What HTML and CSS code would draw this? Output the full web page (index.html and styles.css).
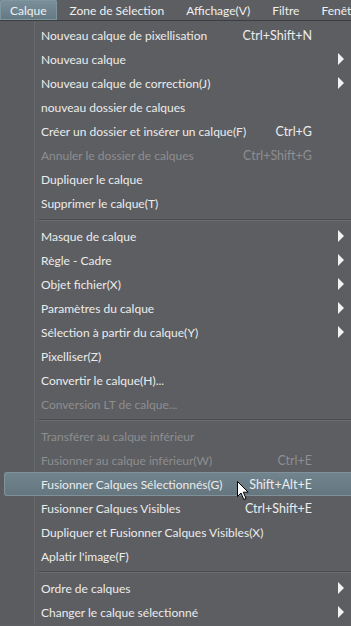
FILE: index.html
```html
<!DOCTYPE html>
<html lang="fr">
<head>
    <meta charset="UTF-8">
    <title>Calque</title>
    <link rel="stylesheet" href="styles.css">
</head>
<body>

    <div class="menubar">
        <span class="menubar-item active">Calque</span>
        <span class="menubar-item">Zone de Sélection</span>
        <span class="menubar-item">Affichage(V)</span>
        <span class="menubar-item">Filtre</span>
        <span class="menubar-item">Fenêtre</span>
    </div>

    <div class="menu">
        <div class="item"><span class="label">Nouveau calque de pixellisation</span><span class="key">Ctrl+Shift+N</span><span class="arrow"></span></div>
        <div class="item"><span class="label">Nouveau calque</span><span class="key"></span><span class="arrow sub"></span></div>
        <div class="item"><span class="label">Nouveau calque de correction(J)</span><span class="key"></span><span class="arrow sub"></span></div>
        <div class="item"><span class="label">nouveau dossier de calques</span><span class="key"></span><span class="arrow"></span></div>
        <div class="item"><span class="label">Créer un dossier et insérer un calque(F)</span><span class="key">Ctrl+G</span><span class="arrow"></span></div>
        <div class="item disabled"><span class="label">Annuler le dossier de calques</span><span class="key">Ctrl+Shift+G</span><span class="arrow"></span></div>
        <div class="item"><span class="label">Dupliquer le calque</span><span class="key"></span><span class="arrow"></span></div>
        <div class="item"><span class="label">Supprimer le calque(T)</span><span class="key"></span><span class="arrow"></span></div>

        <div class="sep first"></div>

        <div class="item"><span class="label">Masque de calque</span><span class="key"></span><span class="arrow sub"></span></div>
        <div class="item"><span class="label">Règle - Cadre</span><span class="key"></span><span class="arrow sub"></span></div>
        <div class="item"><span class="label">Objet fichier(X)</span><span class="key"></span><span class="arrow sub"></span></div>
        <div class="item"><span class="label">Paramètres du calque</span><span class="key"></span><span class="arrow sub"></span></div>
        <div class="item"><span class="label">Sélection à partir du calque(Y)</span><span class="key"></span><span class="arrow sub"></span></div>
        <div class="item"><span class="label">Pixelliser(Z)</span><span class="key"></span><span class="arrow"></span></div>
        <div class="item"><span class="label">Convertir le calque(H)...</span><span class="key"></span><span class="arrow"></span></div>
        <div class="item disabled"><span class="label">Conversion LT de calque...</span><span class="key"></span><span class="arrow"></span></div>

        <div class="sep"></div>

        <div class="item disabled"><span class="label">Transférer au calque inférieur</span><span class="key"></span><span class="arrow"></span></div>
        <div class="item disabled"><span class="label">Fusionner au calque inférieur(W)</span><span class="key">Ctrl+E</span><span class="arrow"></span></div>
        <div class="item hover"><span class="label">Fusionner Calques Sélectionnés(G)</span><span class="key">Shift+Alt+E</span><span class="arrow"></span>
            <svg class="cursor" width="13" height="20" viewBox="0 0 13 20">
                <path d="M0.5 0.5 L0.5 15.5 L4 12 L6.8 18.5 L9 17.5 L6.3 11.2 L11.2 11.2 Z" fill="#fff" stroke="#000" stroke-width="1"/>
            </svg>
        </div>
        <div class="item"><span class="label">Fusionner Calques Visibles</span><span class="key">Ctrl+Shift+E</span><span class="arrow"></span></div>
        <div class="item"><span class="label">Dupliquer et Fusionner Calques Visibles(X)</span><span class="key"></span><span class="arrow"></span></div>
        <div class="item"><span class="label">Aplatir l'image(F)</span><span class="key"></span><span class="arrow"></span></div>

        <div class="sep"></div>

        <div class="item"><span class="label">Ordre de calques</span><span class="key"></span><span class="arrow sub"></span></div>
        <div class="item"><span class="label">Changer le calque sélectionné</span><span class="key"></span><span class="arrow sub"></span></div>
    </div>

</body>
</html>
```

FILE: styles.css
```css
body {
    margin: 0;
    width: 351px;
    height: 626px;
    overflow: hidden;
    background-color: #5d5e61;
    font-family: 'Lato', 'Open Sans', sans-serif;
    font-size: 12px;
    color: #ececec;
}

.menubar {
    display: flex;
    height: 20px;
    border-bottom: 1px solid #3c3d40;
    background-color: #5d5e61;
    white-space: nowrap;
    overflow: hidden;
}

.menubar-item {
    display: flex;
    align-items: center;
    flex: none;
    padding: 0 11px;
    color: #f0f0f0;
}

.menubar-item.active {
    background: linear-gradient(#7a909b, #647882);
    border-radius: 2px 2px 0 0;
    box-shadow: inset 0 0 0 1px #80969f;
    padding: 0 10px;
    margin-right: 2px;
}

.menu {
    position: relative;
    padding-top: 2px;
    background: linear-gradient(to right, #5b5c5f 34px, #68696c 34px, #68696c 35px, #5d5e61 35px);
}

.item {
    position: relative;
    display: grid;
    grid-template-columns: minmax(0, 1fr) auto 39px;
    align-items: center;
    height: 24px;
    padding-left: 41px;
    white-space: nowrap;
}

.item .key {
    text-align: right;
    font-size: 12.5px;
}

.item .arrow.sub::after {
    content: '';
    display: block;
    margin-left: 26px;
    border-left: 6px solid #f2f2f2;
    border-top: 6px solid transparent;
    border-bottom: 6px solid transparent;
    width: 0;
    height: 0;
}

.item.disabled {
    color: #8d8e91;
}

.item.hover {
    margin-left: 4px;
    padding-left: 36px;
    background: linear-gradient(#71848e, #65767f);
    border: 1px solid #7f929b;
    border-right: none;
    border-radius: 3px 0 0 3px;
    height: 22px;
}

.cursor {
    position: absolute;
    left: 232px;
    top: 8px;
}

.sep {
    height: 8px;
    margin-left: 39px;
    display: flex;
    flex-direction: column;
    justify-content: center;
}

.sep.first {
    height: 9px;
}

.sep::before {
    content: '';
    display: block;
    height: 1px;
    background-color: #4a4b4e;
}

.sep::after {
    content: '';
    display: block;
    height: 1px;
    background-color: #6c6d70;
}
```
